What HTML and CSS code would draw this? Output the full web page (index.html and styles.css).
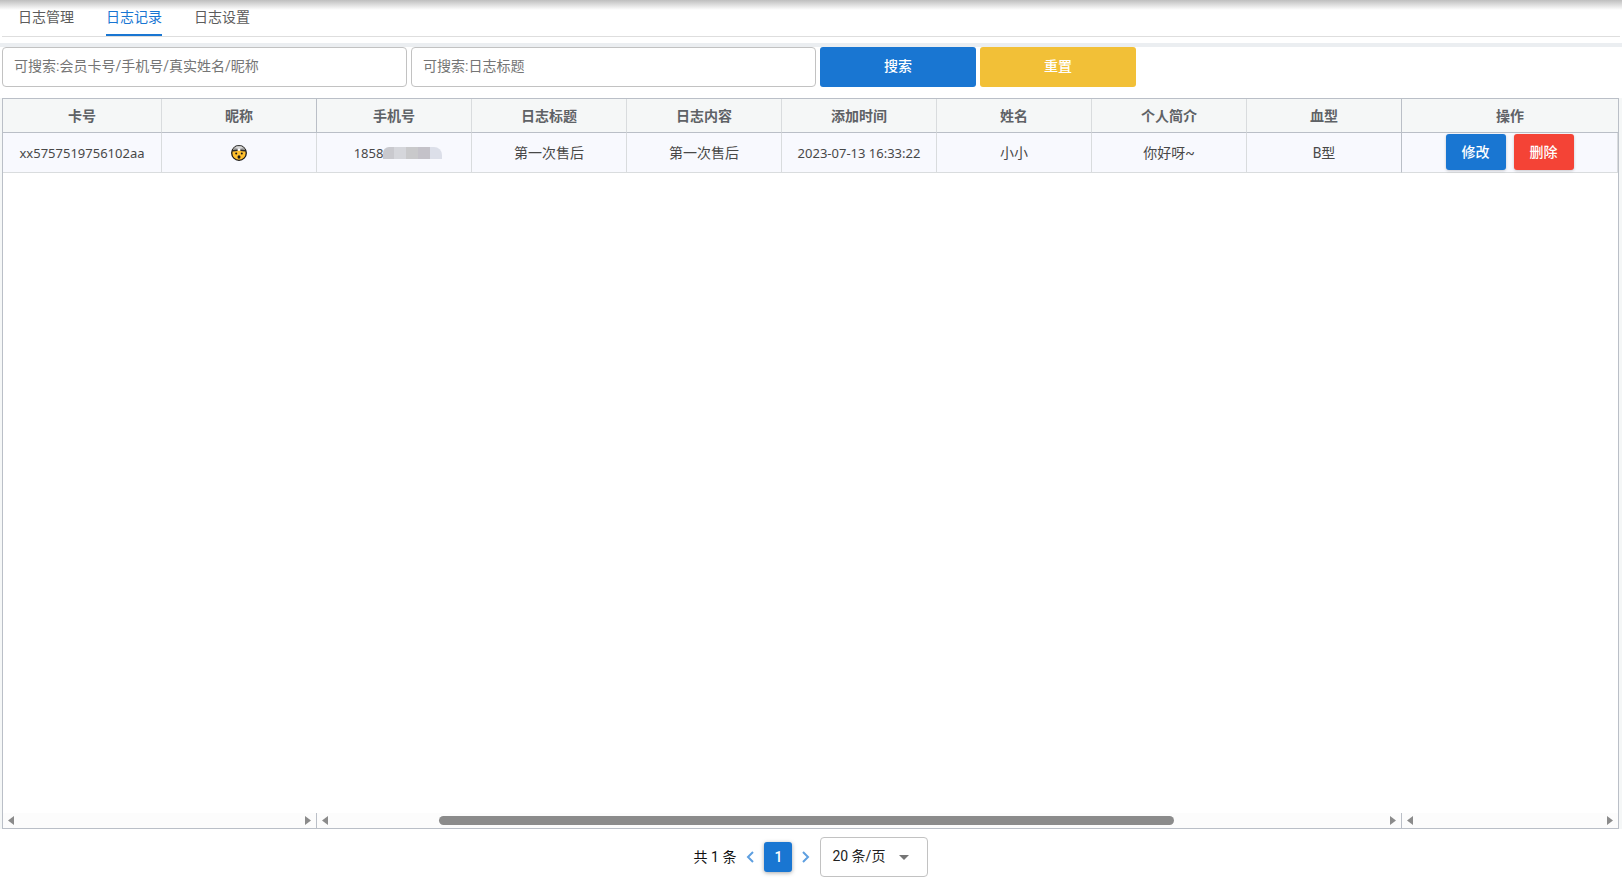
FILE: index.html
```html
<!DOCTYPE html>
<html lang="zh-CN">
<head>
<meta charset="utf-8">
<meta name="viewport" content="width=device-width, initial-scale=1">
<title>日志记录</title>
<link rel="stylesheet" href="styles.css">
</head>
<body>
<header class="topbar">
  <nav class="tabs">
    <a class="tab" href="#manage">日志管理</a>
    <a class="tab tab-active" href="#records" aria-current="page">日志记录</a>
    <a class="tab" href="#settings">日志设置</a>
  </nav>
</header>
<main class="page">
  <form class="filters">
    <input class="field" type="text" aria-label="会员" placeholder="可搜索:会员卡号/手机号/真实姓名/昵称">
    <input class="field" type="text" aria-label="日志标题" placeholder="可搜索:日志标题">
    <button class="btn btn-primary" type="button">搜索</button>
    <button class="btn btn-warning" type="reset">重置</button>
  </form>
  <section class="grid-shell">
    <div class="grid">
      <div class="grid-body">
        <table class="grid-table">
          <colgroup>
            <col class="col-card"><col class="col-name">
            <col><col><col><col><col><col><col>
            <col class="col-actions">
          </colgroup>
          <thead>
            <tr>
              <th>卡号</th><th class="pin-edge">昵称</th><th>手机号</th><th>日志标题</th><th>日志内容</th><th>添加时间</th><th>姓名</th><th>个人简介</th><th class="pin-edge">血型</th><th>操作</th>
            </tr>
          </thead>
          <tbody>
            <tr>
              <td class="latin">xx5757519756102aa</td>
              <td>
                <svg class="emoji" viewBox="0 0 16 16" role="img" aria-label="昵称表情">
                  <circle cx="8" cy="8" r="7.3" fill="#ffc02e" stroke="#1b1b1b" stroke-width="1.300"/>
                  <path d="M1.800 5.400C2.400 2.200 5 .7 8 .7s5.600 1.500 6.200 4.700L11.500 6 8 5 4.500 6z" fill="#a8a8a8"/>
                  <path d="M4 2.600C6 1.200 10 1.200 12 2.600L10 3.600H6z" fill="#d8d8d8"/>
                  <path d="M6.800 3.500h2.400v2.200H6.800z" fill="#fff"/>
                  <path d="M2 5.800l4.500-.6M14 5.800l-4.500-.6" stroke="#2b2b2b" stroke-width="1.500"/>
                  <circle cx="5.200" cy="8.600" r="1" fill="#1b1b1b"/>
                  <circle cx="10.800" cy="8.600" r="1" fill="#1b1b1b"/>
                  <ellipse cx="8" cy="12" rx="1.500" ry="1.700" fill="#1b1b1b"/>
                </svg>
              </td>
              <td class="latin"><span class="phone">1858<span class="mask"></span></span></td>
              <td>第一次售后</td>
              <td>第一次售后</td>
              <td class="latin">2023-07-13 16:33:22</td>
              <td>小小</td>
              <td>你好呀~</td>
              <td class="pin-edge">B型</td>
              <td class="actions-cell">
                <div class="actions">
                  <button class="btn btn-small btn-primary" type="button">修改</button>
                  <button class="btn btn-small btn-danger" type="button">删除</button>
                </div>
              </td>
            </tr>
          </tbody>
        </table>
      </div>
      <div class="scrollers">
        <div class="scroller scroller-left">
          <svg class="arrow" viewBox="0 0 6 9"><path d="M6 0v9L0 4.500z"/></svg>
          <svg class="arrow" viewBox="0 0 6 9"><path d="M0 0v9l6-4.500z"/></svg>
        </div>
        <div class="scroller scroller-middle">
          <svg class="arrow" viewBox="0 0 6 9"><path d="M6 0v9L0 4.500z"/></svg>
          <div class="track"><div class="thumb"></div></div>
          <svg class="arrow" viewBox="0 0 6 9"><path d="M0 0v9l6-4.500z"/></svg>
        </div>
        <div class="scroller scroller-right">
          <svg class="arrow" viewBox="0 0 6 9"><path d="M6 0v9L0 4.500z"/></svg>
          <svg class="arrow" viewBox="0 0 6 9"><path d="M0 0v9l6-4.500z"/></svg>
        </div>
      </div>
    </div>
  </section>
  <footer class="pager">
    <span>共 1 条</span>
    <button class="step" type="button" aria-label="上一页"><svg class="chevron" viewBox="0 0 8 12"><path d="M7 1L2 6l5 5"/></svg></button>
    <button class="page-number" type="button" aria-current="page">1</button>
    <button class="step" type="button" aria-label="下一页"><svg class="chevron" viewBox="0 0 8 12"><path d="M1 1l5 5-5 5"/></svg></button>
    <div class="size-picker">
      <select class="size-select" aria-label="每页条数"><option>20 条/页</option></select>
      <svg class="caret" viewBox="0 0 10 5"><path d="M0 0h10L5 5z"/></svg>
    </div>
  </footer>
</main>
</body>
</html>
```
FILE: styles.css
```css
* { box-sizing: border-box; }

body {
  margin: 0;
  min-height: 100vh;
  display: flex;
  flex-direction: column;
  background: #fff;
  color: #111;
  font: 14px/20px Roboto, "Noto Sans CJK SC", sans-serif;
}

button, input, select { font: inherit; }

.topbar {
  padding: 0 2px 6px;
  border-bottom: 4px solid #ebeef1;
  background: linear-gradient(#bebebe, #fff 10px) no-repeat;
}

.tabs {
  display: flex;
  border-bottom: 1px solid #dedede;
}

.tab {
  padding: 7px 0;
  margin: 0 16px;
  border-bottom: 2px solid transparent;
  color: #5c5c5c;
  text-decoration: none;
}

.tab-active {
  color: #1976d2;
  border-color: #1976d2;
}

.page {
  flex: 1;
  display: flex;
  flex-direction: column;
}

.filters {
  display: grid;
  grid-template-columns: 405fr 405fr 156fr 156fr 480fr;
  gap: 4px;
  padding: 0 2px;
}

.field {
  width: 100%;
  height: 40px;
  padding: 0 11px 2px;
  border: 1px solid #c2c2c2;
  border-radius: 4px;
  background: #fff;
  color: #333;
}

.field::placeholder { color: #757575; opacity: 1; }

.btn {
  height: 40px;
  padding: 0 0 2px;
  border: 0;
  border-radius: 3px;
  color: #fff;
  font-weight: 500;
}

.btn-primary { background: #1976d2; }
.btn-warning { background: #f2c037; }
.btn-danger { background: #f44336; }

.grid-shell {
  flex: 1;
  display: flex;
  margin-top: 11px;
  padding: 0 3px 0 2px;
  background: #f5f7f7;
}

.grid {
  flex: 1;
  display: flex;
  flex-direction: column;
  border: 1px solid #babfc7;
  background: #fff;
}

.grid-body { flex: 1; }

.grid-table {
  width: 100%;
  table-layout: fixed;
  border-collapse: separate;
  border-spacing: 0;
  text-align: center;
}

.col-card { width: 159px; }
.col-name { width: 155px; }
.col-actions { width: 216px; }

.grid-table th {
  height: 34px;
  padding: 0;
  border-right: 1px solid #d9dcde;
  border-bottom: 1px solid #babfc7;
  background: #f5f7f7;
  color: #5f6266;
  font-weight: 700;
}

.grid-table td {
  height: 40px;
  padding: 0;
  border-right: 1px solid #d9dcde;
  border-bottom: 1px solid #d9dcde;
  background: #f8f9fe;
  color: #484848;
}

.grid-table .pin-edge { border-right-color: #babfc7; }
.grid-table th:last-child { border-right: 0; }

.grid-table .latin {
  font-family: "Noto Sans", "Noto Sans CJK SC", sans-serif;
  font-size: 13px;
}

.emoji {
  display: block;
  width: 16px;
  height: 16px;
  margin: 0 auto;
}

.phone {
  display: inline-flex;
  align-items: center;
}

.mask {
  width: 59px;
  height: 12px;
  margin-right: -8px;
  border-radius: 6px 8px 0 0;
  background: linear-gradient(90deg, #c9c9ce 11px, #d5d6db 11px 23px, #c9c9cb 23px 35px, #c4c2c9 35px 47px, #dcdfe9 47px);
}

.grid-table .actions-cell { padding-bottom: 2px; }

.actions {
  display: flex;
  justify-content: center;
  gap: 8px;
}

.btn-small {
  width: 60px;
  height: 36px;
  padding: 0;
  box-shadow: 0 1px 3px rgba(0, 0, 0, .2);
}

.scrollers {
  display: flex;
  height: 15px;
  background: #fcfcfc;
}

.scroller {
  display: flex;
  align-items: center;
  justify-content: space-between;
  padding: 0 5px;
}

.scroller-left { width: 314px; border-right: 1px solid #babfc7; }
.scroller-middle { flex: 1; border-right: 1px solid #babfc7; }
.scroller-right { width: 216px; }

.arrow {
  width: 6px;
  height: 9px;
  fill: #8b8b8b;
}

.track { flex: 1; padding: 0 6px; }

.thumb {
  width: 70%;
  height: 9px;
  margin-left: 10%;
  border-radius: 5px;
  background: #8b8b8b;
}

.pager {
  display: flex;
  align-items: center;
  justify-content: center;
  padding: 8px 0 9px;
}

.step {
  display: flex;
  justify-content: center;
  width: 28px;
  padding: 0;
  border: 0;
  background: none;
}

.chevron {
  width: 8px;
  height: 12px;
  fill: none;
  stroke: #5e9fe0;
  stroke-width: 2;
}

.page-number {
  width: 28px;
  height: 30px;
  padding: 0;
  border: 0;
  border-radius: 3px;
  background: #1976d2;
  box-shadow: 0 1px 4px rgba(0, 0, 0, .35);
  color: #fff;
  font-weight: 500;
}

.size-picker {
  display: grid;
  align-items: center;
}

.size-select {
  grid-area: 1 / 1;
  width: 108px;
  height: 40px;
  padding: 0 11px 2px;
  border: 1px solid #c2c2c2;
  border-radius: 4px;
  background: #fff;
  color: #222;
  appearance: none;
}

.caret {
  grid-area: 1 / 1;
  justify-self: end;
  width: 10px;
  height: 5px;
  margin-right: 19px;
  fill: #757575;
  pointer-events: none;
}
```
